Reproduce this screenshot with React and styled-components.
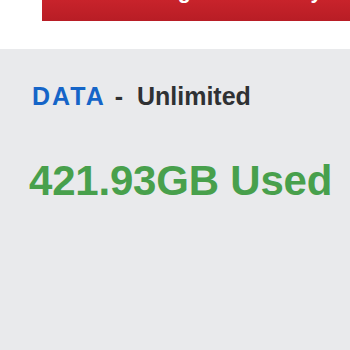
import styled, { createGlobalStyle } from 'styled-components';

const GlobalStyle = createGlobalStyle`
  html, body {
    margin: 0;
    padding: 0;
    background: #ffffff;
  }
  body {
    font-family: "Liberation Sans", Arial, Helvetica, sans-serif;
  }
`;

const Page = styled.div`
  width: 350px;
  height: 350px;
  overflow: hidden;
  display: flex;
  flex-direction: column;
`;

const Header = styled.header`
  height: 49px;
  background: #ffffff;
  padding-left: 42px;
  flex-shrink: 0;
`;

// promo button is scrolled mostly out of view, only descenders show
const PromoButton = styled.div`
  height: 21px;
  overflow: hidden;
  background: linear-gradient(180deg, #c8232b 0%, #b81d25 100%);
  color: #ffffff;
  font-weight: 700;
  font-size: 21.4px;
  line-height: 24px;
  white-space: nowrap;
  padding-left: 81px;
`;

const PromoText = styled.span`
  display: block;
  margin-top: -21px;
`;

const Panel = styled.section`
  flex: 1;
  background: #e9eaec;
  padding: 35px 0 0 32px;
  display: flex;
  flex-direction: column;
  gap: 51px;
`;

const PlanLine = styled.div`
  font-size: 25px;
  line-height: 1;
  font-weight: 700;
  color: #2f3133;
  white-space: nowrap;
`;

const PlanLabel = styled.span`
  color: ${(p) => p.color || '#1565c8'};
  letter-spacing: 2px;
`;

const Separator = styled.span`
  margin: 0 7px 0 2px;
`;

const Usage = styled.div`
  font-size: 42px;
  line-height: 1;
  font-weight: 700;
  color: #48a04c;
  letter-spacing: -0.2px;
  white-space: nowrap;
  margin-left: -3px;
`;

export default function App() {
  return (
    <Page>
      <GlobalStyle />
      <Header>
        <PromoButton>
          <PromoText>Manage Data Today</PromoText>
        </PromoButton>
      </Header>
      <Panel>
        <PlanLine>
          <PlanLabel>DATA</PlanLabel> <Separator>-</Separator> Unlimited
        </PlanLine>
        <Usage>421.93GB Used</Usage>
      </Panel>
    </Page>
  );
}
